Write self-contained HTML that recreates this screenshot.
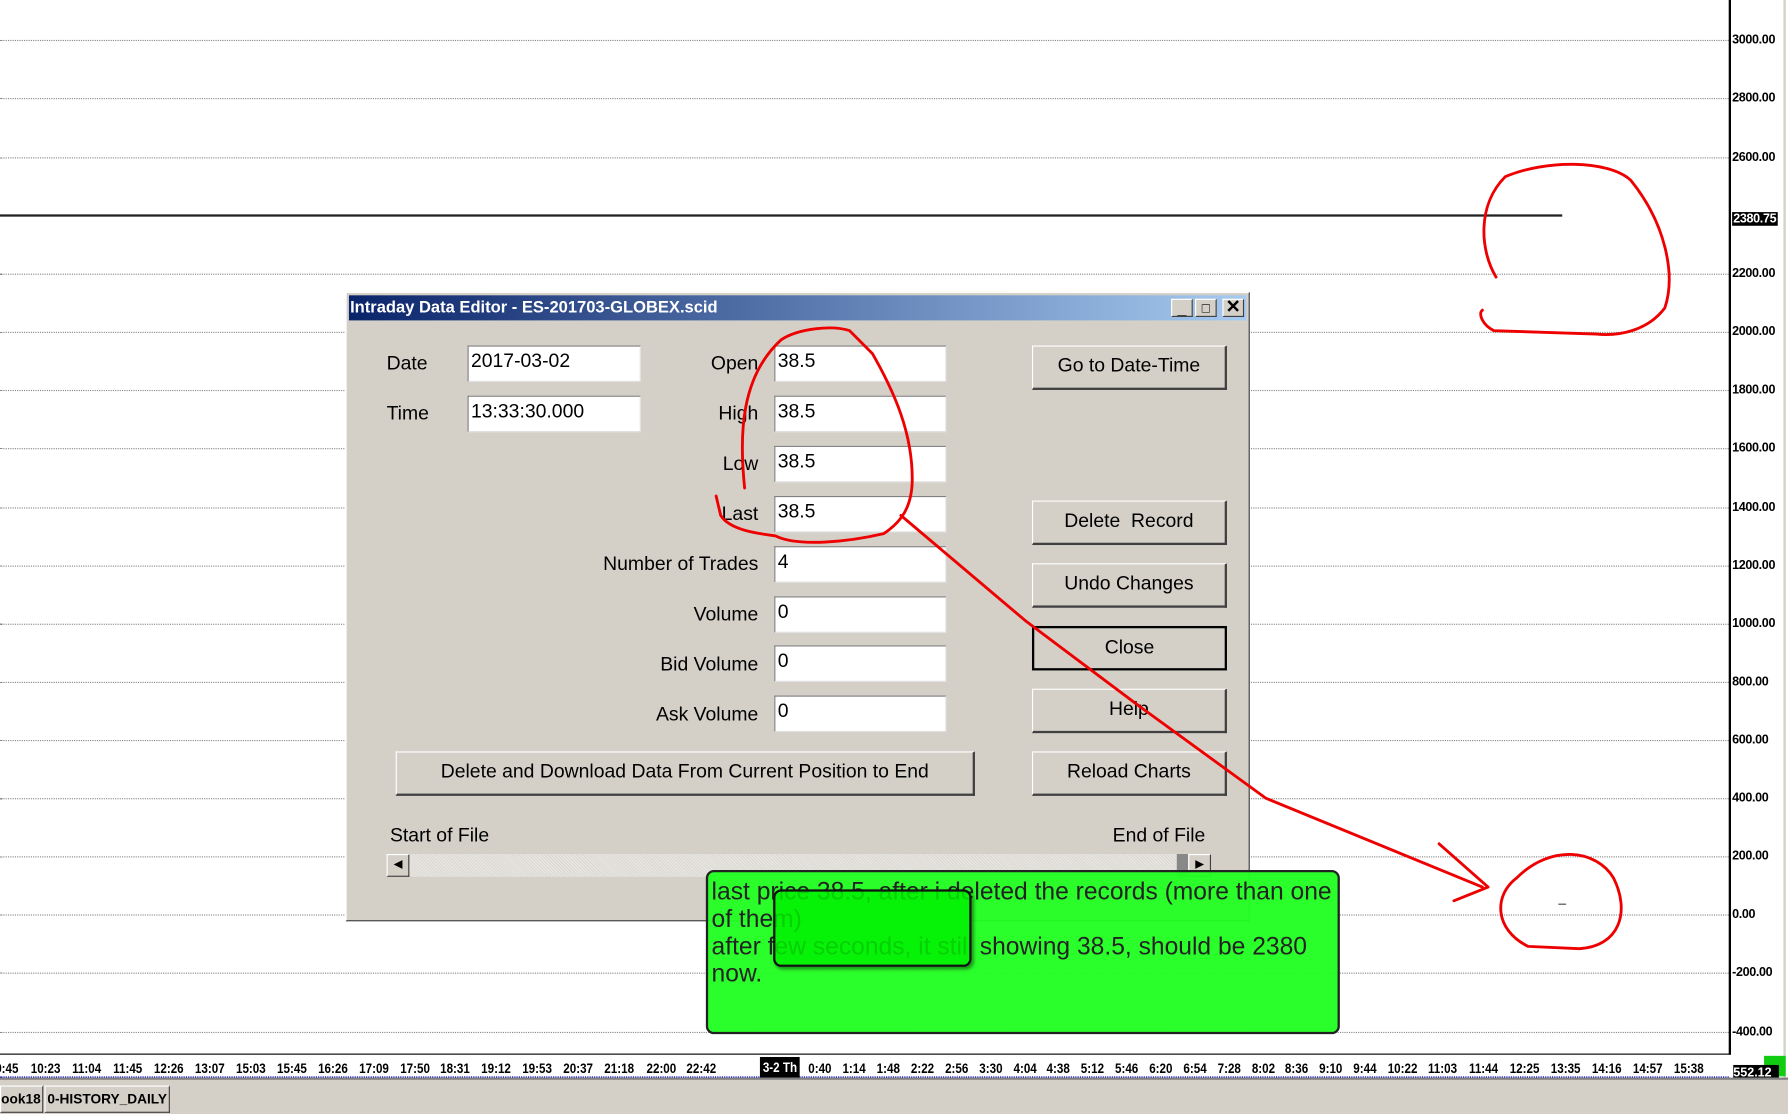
<!DOCTYPE html>
<html><head><meta charset="utf-8">
<style>
html,body{margin:0;padding:0;width:1788px;height:1114px;overflow:hidden;background:#fff}
#s{position:absolute;left:0;top:0;width:1568px;height:977px;transform-origin:0 0;transform:scale(1.14031,1.14022);font-family:"Liberation Sans",Arial,sans-serif;background:#fff;overflow:hidden}
.g{position:absolute;left:0;width:1516px;height:0;border-top:1px dotted #888}
.pl{position:absolute;left:1519px;font:bold 11px "Liberation Sans",sans-serif;color:#000;letter-spacing:-0.3px}
.tl{position:absolute;top:930px;font:bold 12px "Liberation Sans",sans-serif;transform:translateX(-50%) scaleX(0.85);white-space:nowrap;color:#000}
.dlg{position:absolute;left:303px;top:256px;width:791px;height:550px;background:#d4d0c8;border:1px solid #fff;border-right-color:#404040;border-bottom-color:#404040}
.tb{position:absolute;left:2px;top:2px;right:2px;height:22px;background:linear-gradient(90deg,#0a246a,#a6caf0);color:#fff;font:bold 14.5px "Liberation Sans",sans-serif;line-height:22px;padding-left:1px}
.wb{position:absolute;top:3px;width:19px;height:16px;background:#d4d0c8;border:1px solid #fff;border-right-color:#404040;border-bottom-color:#404040;box-sizing:border-box;color:#000;font-size:14px;text-align:center;line-height:14px}
.lb{position:absolute;font-size:17px;color:#000;white-space:nowrap}
.in{position:absolute;width:151px;height:32px;background:#fff;border:1px solid #808080;border-right-color:#e0e0e0;border-bottom-color:#e0e0e0;box-sizing:border-box;font-size:17px;padding:2px 0 0 2px;line-height:22px}
.bt{position:absolute;background:#d4d0c8;border:1px solid #fff;border-right:2px solid #404040;border-bottom:2px solid #404040;box-sizing:border-box;font-size:17px;text-align:center;line-height:34px;color:#000}
</style></head><body><div id="s">
<div class="g" style="top:35px"></div><div class="g" style="top:86px"></div><div class="g" style="top:138px"></div><div class="g" style="top:240px"></div><div class="g" style="top:291px"></div><div class="g" style="top:342px"></div><div class="g" style="top:393px"></div><div class="g" style="top:445px"></div><div class="g" style="top:496px"></div><div class="g" style="top:547px"></div><div class="g" style="top:598px"></div><div class="g" style="top:649px"></div><div class="g" style="top:700px"></div><div class="g" style="top:751px"></div><div class="g" style="top:802px"></div><div class="g" style="top:853px"></div><div class="g" style="top:905px"></div>
<div style="position:absolute;left:0;top:188px;width:1370px;height:1.5px;background:#222"></div>
<div style="position:absolute;left:1516px;top:0;width:2px;height:925px;background:#000"></div>
<div style="position:absolute;left:1564px;top:0;width:2px;height:945px;background:#d4d0c8"></div>
<div class="pl" style="top:29px">3000.00</div><div class="pl" style="top:80px">2800.00</div><div class="pl" style="top:132px">2600.00</div>
<div class="pl" style="top:186px;background:#000;color:#fff;padding:0 1px">2380.75</div>
<div class="pl" style="top:234px">2200.00</div><div class="pl" style="top:285px">2000.00</div><div class="pl" style="top:336px">1800.00</div><div class="pl" style="top:387px">1600.00</div><div class="pl" style="top:439px">1400.00</div><div class="pl" style="top:490px">1200.00</div><div class="pl" style="top:541px">1000.00</div><div class="pl" style="top:592px">800.00</div><div class="pl" style="top:643px">600.00</div><div class="pl" style="top:694px">400.00</div><div class="pl" style="top:745px">200.00</div><div class="pl" style="top:796px">0.00</div><div class="pl" style="top:847px">-200.00</div><div class="pl" style="top:899px">-400.00</div>
<div style="position:absolute;left:0;top:924px;width:1518px;height:1px;background:#000"></div>
<div style="position:absolute;left:0;top:944px;width:1516px;border-top:1px dotted #00c"></div>
<div class="tl" style="left:6px">9:45</div><div class="tl" style="left:40px">10:23</div><div class="tl" style="left:76px">11:04</div><div class="tl" style="left:112px">11:45</div><div class="tl" style="left:148px">12:26</div><div class="tl" style="left:184px">13:07</div><div class="tl" style="left:220px">15:03</div><div class="tl" style="left:256px">15:45</div><div class="tl" style="left:292px">16:26</div><div class="tl" style="left:328px">17:09</div><div class="tl" style="left:364px">17:50</div><div class="tl" style="left:399px">18:31</div><div class="tl" style="left:435px">19:12</div><div class="tl" style="left:471px">19:53</div><div class="tl" style="left:507px">20:37</div><div class="tl" style="left:543px">21:18</div><div class="tl" style="left:580px">22:00</div><div class="tl" style="left:615px">22:42</div>
<div class="tl" style="left:684px;top:927px;background:#000;color:#fff;padding:2px 3px">3-2 Th</div>
<div class="tl" style="left:719px">0:40</div><div class="tl" style="left:749px">1:14</div><div class="tl" style="left:779px">1:48</div><div class="tl" style="left:809px">2:22</div><div class="tl" style="left:839px">2:56</div><div class="tl" style="left:869px">3:30</div><div class="tl" style="left:899px">4:04</div><div class="tl" style="left:928px">4:38</div><div class="tl" style="left:958px">5:12</div><div class="tl" style="left:988px">5:46</div><div class="tl" style="left:1018px">6:20</div><div class="tl" style="left:1048px">6:54</div><div class="tl" style="left:1078px">7:28</div><div class="tl" style="left:1108px">8:02</div><div class="tl" style="left:1137px">8:36</div><div class="tl" style="left:1167px">9:10</div><div class="tl" style="left:1197px">9:44</div><div class="tl" style="left:1230px">10:22</div><div class="tl" style="left:1265px">11:03</div><div class="tl" style="left:1301px">11:44</div><div class="tl" style="left:1337px">12:25</div><div class="tl" style="left:1373px">13:35</div><div class="tl" style="left:1409px">14:16</div><div class="tl" style="left:1445px">14:57</div><div class="tl" style="left:1481px">15:38</div>
<div style="position:absolute;left:1547px;top:926px;width:19px;height:18px;background:#1c1"></div>
<div style="position:absolute;left:1520px;top:934px;width:40px;height:11px;background:#000;color:#fff;font:bold 11px sans-serif;line-height:14px;overflow:hidden">552.12</div>
<div style="position:absolute;left:0;top:945px;width:1568px;height:32px;background:#d4d0c8;border-top:2px solid #808080"></div>
<div style="position:absolute;left:0;top:952px;width:36px;height:22px;border:1px solid #fff;border-right-color:#404040;border-bottom-color:#404040;font:bold 12px sans-serif;line-height:22px;background:#d4d0c8">ook18</div>
<div style="position:absolute;left:39px;top:952px;width:108px;height:22px;border:1px solid #fff;border-right-color:#404040;border-bottom-color:#404040;font:bold 12px sans-serif;line-height:22px;text-align:center;background:#d4d0c8">0-HISTORY_DAILY</div>
<div class="dlg">
<div class="tb">Intraday Data Editor - ES-201703-GLOBEX.scid
<div class="wb" style="left:721px">_</div><div class="wb" style="left:742px;font-size:12px">□</div><div class="wb" style="left:766px;font-size:16px">✕</div></div>
</div>
<div class="lb" style="left:339px;top:309px">Date</div>
<div class="lb" style="left:339px;top:353px">Time</div>
<div class="in" style="left:410px;top:303px;width:152px">2017-03-02</div>
<div class="in" style="left:410px;top:347px;width:152px">13:33:30.000</div>
<div class="lb" style="right:903px;top:309px">Open</div>
<div class="lb" style="right:903px;top:353px">High</div>
<div class="lb" style="right:903px;top:397px">Low</div>
<div class="lb" style="right:903px;top:441px">Last</div>
<div class="lb" style="right:903px;top:485px">Number of Trades</div>
<div class="lb" style="right:903px;top:529px">Volume</div>
<div class="lb" style="right:903px;top:573px">Bid Volume</div>
<div class="lb" style="right:903px;top:617px">Ask Volume</div>
<div class="in" style="left:679px;top:303px">38.5</div>
<div class="in" style="left:679px;top:347px">38.5</div>
<div class="in" style="left:679px;top:391px">38.5</div>
<div class="in" style="left:679px;top:435px">38.5</div>
<div class="in" style="left:679px;top:479px">4</div>
<div class="in" style="left:679px;top:523px">0</div>
<div class="in" style="left:679px;top:566px">0</div>
<div class="in" style="left:679px;top:610px">0</div>
<div class="bt" style="left:905px;top:303px;width:171px;height:39px">Go to Date-Time</div>
<div class="bt" style="left:905px;top:439px;width:171px;height:39px">Delete&nbsp; Record</div>
<div class="bt" style="left:905px;top:494px;width:171px;height:39px">Undo Changes</div>
<div class="bt" style="left:905px;top:549px;width:171px;height:39px;border:2px solid #000">Close</div>
<div class="bt" style="left:905px;top:604px;width:171px;height:39px">Help</div>
<div class="bt" style="left:905px;top:659px;width:171px;height:39px">Reload Charts</div>
<div class="bt" style="left:347px;top:659px;width:508px;height:39px">Delete and Download Data From Current Position to End</div>
<div class="lb" style="left:342px;top:723px">Start of File</div>
<div class="lb" style="right:511px;top:723px">End of File</div>
<div style="position:absolute;left:339px;top:749px;width:723px;height:20px;background:repeating-linear-gradient(45deg,#e8e6e2 0 1px,#dcd9d3 1px 2px)"></div>
<div style="position:absolute;left:339px;top:749px;width:20px;height:20px;background:#d4d0c8;border:1px solid #fff;border-right-color:#404040;border-bottom-color:#404040;box-sizing:border-box;font-size:10px;text-align:center;line-height:18px">◀</div>
<div style="position:absolute;left:1032px;top:749px;width:10px;height:20px;background:#888"></div>
<div style="position:absolute;left:1042px;top:749px;width:20px;height:20px;background:#d4d0c8;border:1px solid #fff;border-right-color:#404040;border-bottom-color:#404040;box-sizing:border-box;font-size:10px;text-align:center;line-height:18px">▶</div>
<div style="position:absolute;left:619px;top:763px;width:556px;height:144px;background:rgba(34,255,34,0.96);border:2px solid #222;border-radius:7px;font-size:21.6px;line-height:24px;color:#222;padding:5px 4px 0 3px;box-sizing:border-box">last price 38.5, after i deleted the records (more than one of them)<br>after few seconds, it still showing 38.5, should be 2380 now.</div>
<div style="position:absolute;left:678px;top:780px;width:174px;height:68px;background:rgba(0,240,0,0.85);border:2px solid #111;border-radius:7px;box-sizing:border-box;box-shadow:2px 2px 3px rgba(0,0,0,.4)"></div>
<svg width="1568" height="977" style="position:absolute;left:0;top:0" fill="none" stroke="#e00" stroke-width="2.5" stroke-linecap="round" stroke-linejoin="round">
<path d="M653 428 C648 380 650 330 685 298 C700 288 730 285 745 290 L765 310 C785 345 800 380 800 420 C800 445 790 458 775 468 C745 475 700 480 680 470 C665 468 640 465 632 452 L628 435"/>
<path d="M790 452 L900 545 L1000 620 L1110 700 L1300 778"/>
<path d="M1262 740 L1305 778 L1275 790"/>
<path d="M1330 770 C1360 740 1400 745 1415 770 C1430 800 1420 830 1385 832 L1340 830 C1310 815 1310 785 1330 770 Z"/>
<path d="M1312 243 C1298 220 1295 180 1320 155 C1355 140 1410 140 1430 158 C1460 195 1470 240 1460 270 C1445 290 1420 295 1400 293 L1310 290 C1300 285 1296 275 1300 272"/>
<path d="M1367 793 L1373 793" stroke="#444" stroke-width="1"/>
</svg>
</div></body></html>
